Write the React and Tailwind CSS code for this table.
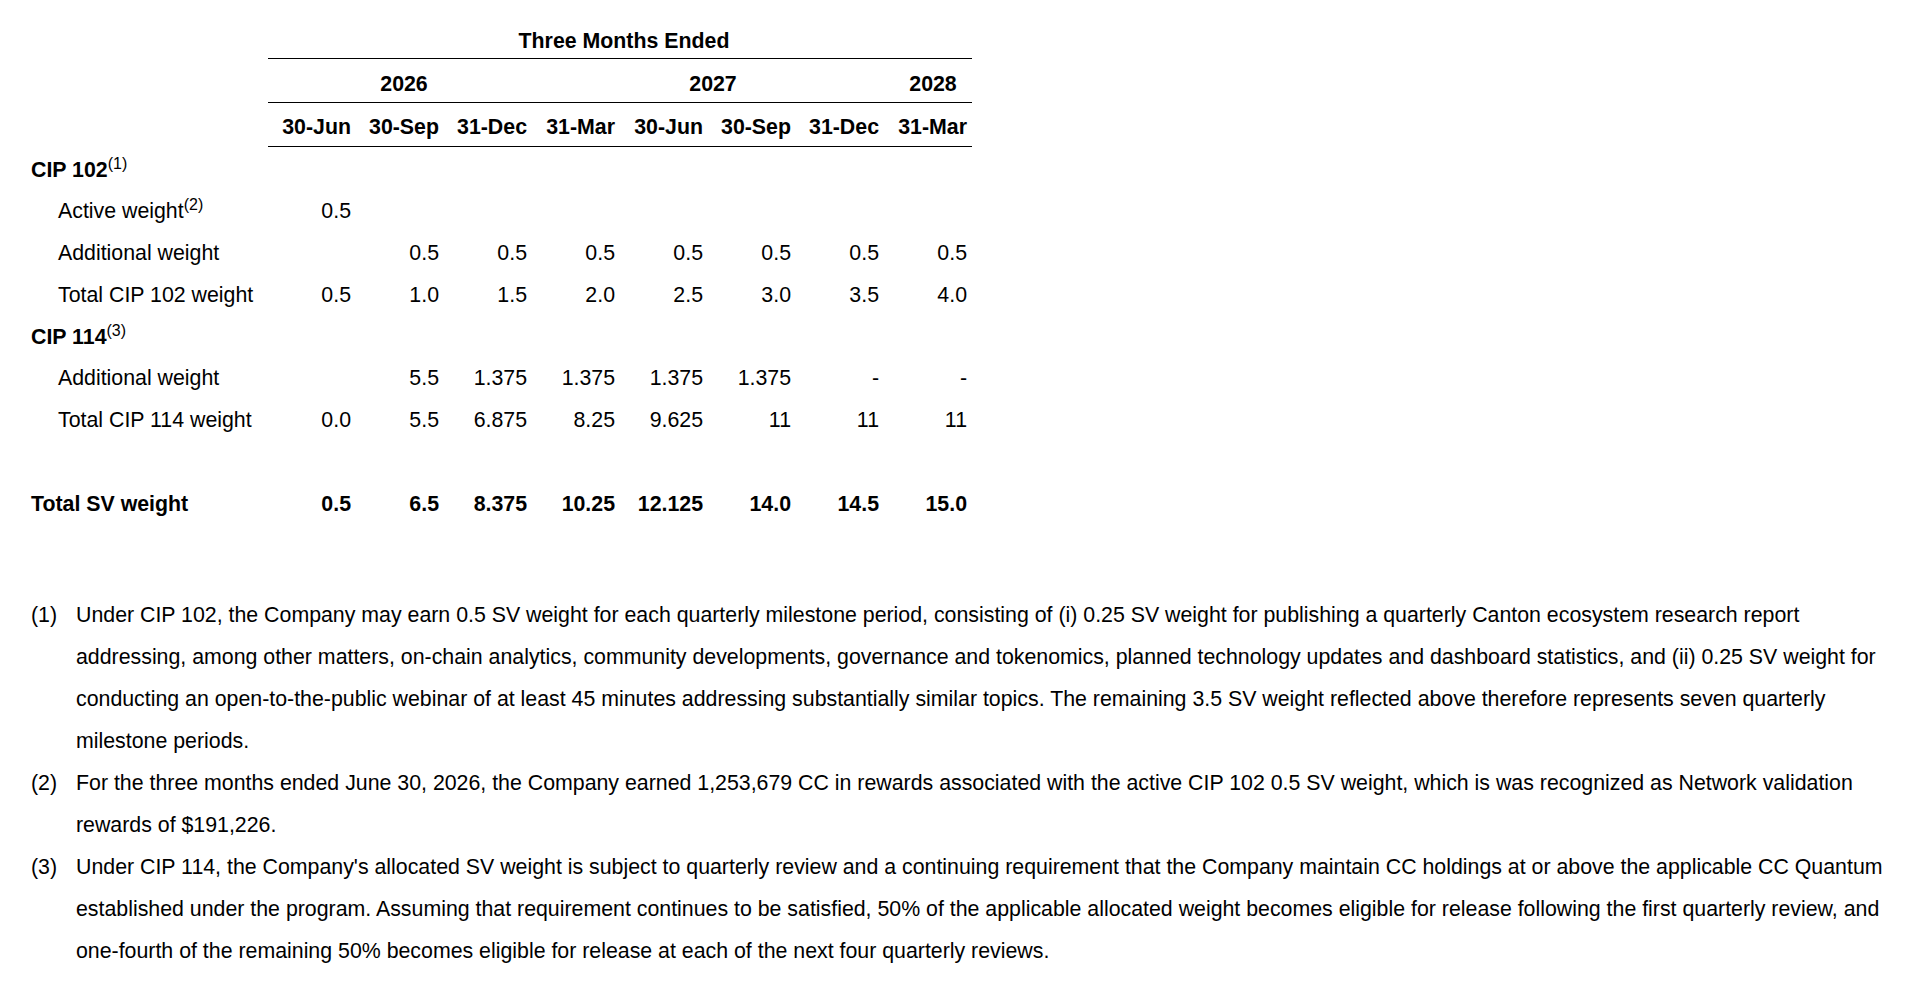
const dates = ["30-Jun", "30-Sep", "31-Dec", "31-Mar", "30-Jun", "30-Sep", "31-Dec", "31-Mar"];

const rows = [
  { label: "CIP 102", note: "1", head: true, values: [] },
  { label: "Active weight", note: "2", values: ["0.5"] },
  { label: "Additional weight", values: ["", "0.5", "0.5", "0.5", "0.5", "0.5", "0.5", "0.5"] },
  { label: "Total CIP 102 weight", values: ["0.5", "1.0", "1.5", "2.0", "2.5", "3.0", "3.5", "4.0"] },
  { label: "CIP 114", note: "3", head: true, values: [] },
  { label: "Additional weight", values: ["", "5.5", "1.375", "1.375", "1.375", "1.375", "-", "-"] },
  { label: "Total CIP 114 weight", values: ["0.0", "5.5", "6.875", "8.25", "9.625", "11", "11", "11"] },
  { label: "", values: [] },
  { label: "Total SV weight", head: true, bold: true, values: ["0.5", "6.5", "8.375", "10.25", "12.125", "14.0", "14.5", "15.0"] },
];

const notes = [
  {
    n: "(1)",
    text: "Under CIP 102, the Company may earn 0.5 SV weight for each quarterly milestone period, consisting of (i) 0.25 SV weight for publishing a quarterly Canton ecosystem research report addressing, among other matters, on-chain analytics, community developments, governance and tokenomics, planned technology updates and dashboard statistics, and (ii) 0.25 SV weight for conducting an open-to-the-public webinar of at least 45 minutes addressing substantially similar topics. The remaining 3.5 SV weight reflected above therefore represents seven quarterly milestone periods.",
  },
  {
    n: "(2)",
    text: "For the three months ended June 30, 2026, the Company earned 1,253,679 CC in rewards associated with the active CIP 102 0.5 SV weight, which is was recognized as Network validation rewards of $191,226.",
  },
  {
    n: "(3)",
    text: "Under CIP 114, the Company's allocated SV weight is subject to quarterly review and a continuing requirement that the Company maintain CC holdings at or above the applicable CC Quantum established under the program. Assuming that requirement continues to be satisfied, 50% of the applicable allocated weight becomes eligible for release following the first quarterly review, and one-fourth of the remaining 50% becomes eligible for release at each of the next four quarterly reviews.",
  },
];

export default function App() {
  return (
    <div className="min-h-screen bg-white text-black text-[21.33px] font-['Liberation_Sans',Arial,sans-serif]">
      {/* Weight schedule */}
      <div className="pt-[15px]">
        <div className="grid grid-cols-[268px_repeat(8,88px)]">
          <div />
          <div className="col-span-8 h-[44px] border-b border-black pt-[8px] pl-[8px] leading-[36px] text-center font-bold">
            Three Months Ended
          </div>

          <div />
          <div className="col-span-3 h-[44px] border-b border-black pt-[6px] pl-[8px] leading-[38px] text-center font-bold">2026</div>
          <div className="col-span-4 h-[44px] border-b border-black pt-[6px] pl-[10px] leading-[38px] text-center font-bold">2027</div>
          <div className="h-[44px] border-b border-black pt-[6px] pl-[10px] leading-[38px] text-center font-bold">2028</div>

          <div />
          {dates.map((d, i) => (
            <div key={i} className="h-[44px] border-b border-black pt-[4px] pr-[5px] leading-[40px] text-right font-bold whitespace-nowrap">
              {d}
            </div>
          ))}

          {rows.map((r, ri) => (
            <div key={ri} className="contents">
              <div className={`h-[41.75px] pt-[2.5px] leading-[41.75px] whitespace-nowrap ${r.head ? "pl-[31px] font-bold" : "pl-[58px]"}`}>
                {r.label}
                {r.note && <sup className="font-normal">({r.note})</sup>}
              </div>
              {Array.from({ length: 8 }).map((_, ci) => (
                <div key={ci} className={`h-[41.75px] pt-[2.5px] leading-[41.75px] pr-[5px] text-right ${r.bold ? "font-bold" : ""}`}>
                  {r.values[ci] || ""}
                </div>
              ))}
            </div>
          ))}
        </div>
      </div>

      {/* Footnotes */}
      <div className="mt-[71px] pl-[31px] pr-[10px] pb-[20px]">
        {notes.map((f) => (
          <div key={f.n} className="flex leading-[42px]">
            <div className="w-[45px] shrink-0">{f.n}</div>
            <div className="flex-1">{f.text}</div>
          </div>
        ))}
      </div>
    </div>
  );
}
